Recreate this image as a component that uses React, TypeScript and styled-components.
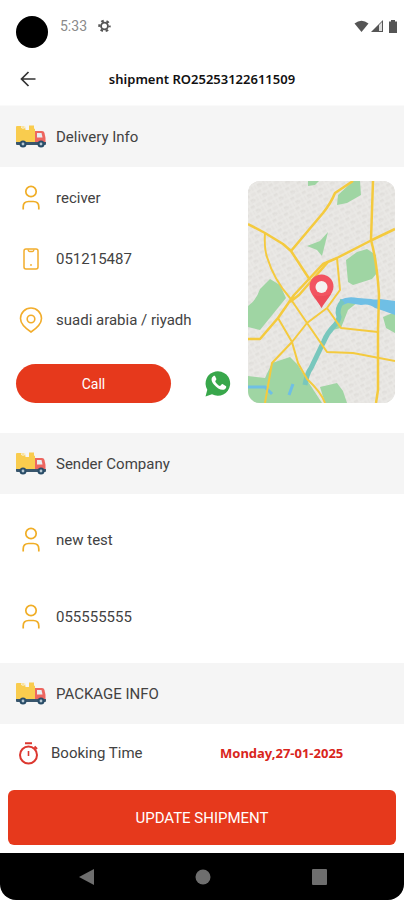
import React from "react";
import styled, { createGlobalStyle } from "styled-components";

const GlobalStyle = createGlobalStyle`
  *, *::before, *::after { box-sizing: border-box; }
  body { margin: 0; background: #fff; font-family: Roboto, "Open Sans", sans-serif; color: #424242; }
  h1, h2, p, dl, dd { margin: 0; }
  button { border: 0; padding: 0; font-family: inherit; cursor: pointer; }
  svg { display: block; flex: none; }
`;

const Screen = styled.div`
  display: flex;
  flex-direction: column;
  min-height: 100vh;
  background: #fff;
`;

const StatusBar = styled.div`
  display: flex;
  align-items: center;
  height: 52px;
  padding: 0 6px 0 16px;
  color: #555;
`;

const CameraHole = styled.span`
  width: 32px;
  height: 32px;
  margin-top: 12px;
  border-radius: 50%;
  background: #000;
`;

const Clock = styled.span`
  margin: 0 11px 0 12px;
  font-size: 14px;
  color: #8a8a8a;
`;

const StatusIcons = styled.div`
  display: flex;
  align-items: center;
  gap: 2px;
  margin-left: auto;
`;

const AppBar = styled.header`
  display: grid;
  grid-template-columns: 56px 1fr 56px;
  align-items: center;
  height: 54px;
  border-bottom: 1px solid #fafafa;
`;

const IconButton = styled.button`
  display: grid;
  place-items: center;
  background: transparent;
  color: #333;
`;

const Title = styled.h1`
  font-family: "Noto Sans", sans-serif;
  font-size: 13px;
  font-weight: 600;
  line-height: 20px;
  text-align: center;
  color: #111;
`;

const Band = styled.div`
  display: flex;
  align-items: center;
  gap: 10px;
  height: 61px;
  padding: 0 16px;
  background: #f5f5f5;
`;

const BandTitle = styled.h2`
  font-size: 15px;
  font-weight: 400;
  line-height: 24px;
`;

const DeliveryBody = styled.div`
  display: flex;
  gap: 17px;
  padding: 0 9px 30px 16px;
`;

const DeliveryDetails = styled.div`
  flex: 1;
  min-width: 0;
`;

const MapButton = styled.button`
  width: 147px;
  height: 222px;
  margin-top: 14px;
  border-radius: 12px;
  overflow: hidden;
  background: #e6e5e1;
`;

const InfoRow = styled.div<{ $tall?: boolean }>`
  display: flex;
  align-items: center;
  gap: 10px;
  height: ${(p) => (p.$tall ? 77 : 61)}px;
  font-size: 15px;
  line-height: 24px;
`;

const IconSlot = styled.span`
  display: grid;
  place-items: center;
  width: 30px;
`;

const SenderBody = styled.div`
  padding: 7px 16px 8px;
`;

const ContactActions = styled.div`
  display: flex;
  align-items: center;
  justify-content: space-between;
  margin-top: 14px;
`;

const CallButton = styled.button`
  width: 155px;
  height: 39px;
  border-radius: 20px;
  background: #e6391c;
  color: #fff;
  font-size: 14px;
`;

const BookingRow = styled.dl`
  display: grid;
  grid-template-columns: 211px 1fr;
  align-items: center;
  height: 58px;
  padding-left: 9px;
`;

const BookingLabel = styled.dt`
  display: flex;
  align-items: center;
  gap: 12px;
  padding-left: 9px;
  font-size: 15px;
  line-height: 24px;
`;

const BookingDate = styled.dd`
  font-family: "Noto Sans", sans-serif;
  font-size: 13px;
  font-weight: 700;
  color: #d9251c;
`;

const Footer = styled.div`
  padding: 8px;
`;

const UpdateButton = styled.button`
  width: 100%;
  height: 55px;
  border-radius: 6px;
  background: #e6391c;
  color: #fff;
  font-size: 15px;
`;

const NavBar = styled.nav`
  display: flex;
  align-items: center;
  justify-content: center;
  gap: 100px;
  height: 47px;
  margin-top: auto;
  border-radius: 0 0 16px 16px;
  background: #000;
`;

const NavButton = styled.button`
  background: transparent;
  color: #6e6e6e;
`;

const Truck = () => (
  <svg width="30" height="24" viewBox="0 0 30 24" aria-hidden="true">
    <path d="M1 1h4v2h4V1h0l.500 4h3.500V.500H18v3l1 .5v14H0V2q0-1 1-1z" fill="#f9cc4e" />
    <path d="M5 1h3.500v3H6z" fill="#fae3a0" />
    <path d="M19 6h7q2 0 2.500 2l1 5v5H19z" fill="#ed6660" />
    <path d="M21 8h4.500l1 4.500H21z" fill="#e8eef2" />
    <path d="M0 17h30v2q0 1-1 1H1q-1 0-1-1z" fill="#39566d" />
    <circle cx="7" cy="19" r="3.500" fill="#294d68" />
    <circle cx="25" cy="19" r="3.500" fill="#294d68" />
    <circle cx="7" cy="19" r="1.400" fill="#b7c8d3" />
    <circle cx="25" cy="19" r="1.400" fill="#b7c8d3" />
  </svg>
);

const Person = () => (
  <svg width="18" height="25" viewBox="0 0 18 25" fill="none" stroke="#f0ad25" strokeWidth="1.700" aria-hidden="true">
    <circle cx="9" cy="6.500" r="5.200" />
    <path d="M1.200 24.500V22q0-5.500 5.500-5.500h4.600q5.500 0 5.500 5.500v2.500" />
  </svg>
);

const Phone = () => (
  <svg width="16" height="22" viewBox="0 0 16 22" fill="none" stroke="#f2ad2c" strokeWidth="1.500" aria-hidden="true">
    <rect x="1" y="1" width="14" height="20" rx="2" />
    <path d="M5 1.500q.3 2 1.500 2h3q1.200 0 1.500-2" />
    <circle cx="8" cy="17" r=".3" />
  </svg>
);

const Place = () => (
  <svg width="24" height="26" viewBox="0 0 24 26" fill="none" stroke="#f2ad2c" strokeWidth="1.600" aria-hidden="true">
    <path d="M12 25C9 23 1.500 17.500 1.500 11.500a10.500 10.500 0 0 1 21 0C22.500 17.500 15 23 12 25z" />
    <circle cx="12" cy="12" r="3.800" />
  </svg>
);

const WhatsApp = () => (
  <svg width="26" height="27" viewBox="0 0 26 27" aria-hidden="true">
    <path d="M.5 26.500 2.300 19.800A12.300 12.300 0 1 1 7 24.300z" fill="#38a74b" />
    <path d="M8.300 6.200c-2.600 1.500-2.200 5 .8 8.600 3.400 4.200 8.200 6.200 10.700 4.400 1.400-.9 1.600-2.300 1.300-3l-3.600-2.100c-1-.2-1.600 1.800-2.500 1.800-1.500-.3-4.200-2.900-4.700-4.500-.1-.9 1.300-1.400 1.100-2.300L10 6.100c-.4-.5-1.100-.4-1.700.1z" fill="#fff" />
  </svg>
);

const Stopwatch = () => (
  <svg width="21" height="23" viewBox="0 0 21 23" fill="none" stroke="#dc3830" strokeWidth="2" aria-hidden="true">
    <circle cx="10.500" cy="13" r="8.500" />
    <path d="M7 1.200h7M16.500 4.500l2.500 2.500" />
    <path d="M10.500 9v5" strokeWidth="1.600" />
  </svg>
);

const CityMap = () => (
  <svg width="100%" height="100%" viewBox="0 0 147 222" preserveAspectRatio="xMidYMid slice" aria-hidden="true">
    <defs>
      <pattern id="blocks" width="13" height="11" patternUnits="userSpaceOnUse" patternTransform="rotate(-28)">
        <path d="M0 1h13M0 6h13M2 0v11M8 0v6M5 6v5M11 6v5" stroke="#ecebe8" strokeWidth="1" />
        <path d="M3 3h4M9 9h2M6 8h3" stroke="#dddbd7" strokeWidth="1" />
      </pattern>
    </defs>
    <path d="M0 0h147v222H0z" fill="#e5e3e0" />
    <path d="M0 0h147v222H0z" fill="url(#blocks)" />
    <g fill="#9fd5a3">
      <path d="M60 0h11l-4 4-7 1zM105 0h7l1 14-14 8-10 2 1-10zM80 51l-6 24-5-6-10-4 13-5z" />
      <path d="M119 68l9 6 1 18-5 6-19 6-5-3-2-22 11-8z" />
      <path d="M22 98l10 6 6 13-26 32-12-3v-21q8-5 12-17z" />
      <path d="M0 195l17 2 7-15 12-4 6-2 8 8 9 15 15 23H0zM72 206l17-4 6 8 4 12H77zM135 136l12-5v21l-9-5z" />
      <path d="M92 118l18 3-10 8-7 18-9 2 6-15z" />
    </g>
    <g fill="none" stroke="#6fbfe5" strokeWidth="3">
      <path d="M0 206h17l7 7M45 203l-4 11" />
    </g>
    <path d="M92 119q7-4 18-2l13 1q5 1 9 0l15 2v14l-11-4-9-3q-6-5-14-3l-13-2-8 3z" fill="#6fbfe5" />
    <path d="M95 120q-7 7-4 16c-1 9-9 9-15 24l-13 27q-4 5-6 17" fill="none" stroke="#78c7bd" strokeWidth="5" />
    <g fill="none" stroke="#f4ca3e" strokeWidth="2" strokeLinejoin="round">
      <path d="M0 43l17 9 18 11 8 7 19 29" strokeWidth="2.500" />
      <path d="M105 0L87 12Q83 22 75 32L43 70M147 48l-23 11-35 18-14 6-29 31-16 23-18 21H0M80 81l-29 33-9 7" strokeWidth="2.500" />
      <path d="M125 0l-2 59q6 22 8 55l-1 35v60l-2 13" strokeWidth="2.500" />
      <path d="M89 77l3 32-13 18-20 15-15 19-20 21-7 40M17 52q-1 15 2 24 7 23 23 41l17 25 20 29 26 1 42 8M79 127l14 20 37 4M30 137l14 24 6 21 9 16q14 13 18 24" />
    </g>
    <path d="M73.500 127C70 120 61.500 113 61.500 105.500a12 12 0 0 1 24 0C85.500 113 77 120 73.500 127z" fill="#f25461" />
    <path d="M66 114q8 3 17-1l-9.500 14z" fill="#e74352" opacity=".5" />
    <circle cx="73.500" cy="106" r="6" fill="#f5f3f1" />
  </svg>
);

const SectionBand = ({ title }: { title: string }) => (
  <Band>
    <Truck />
    <BandTitle>{title}</BandTitle>
  </Band>
);

const Info = ({ icon, text, tall }: { icon: React.ReactNode; text: string; tall?: boolean }) => (
  <InfoRow $tall={tall}>
    <IconSlot>{icon}</IconSlot>
    <p>{text}</p>
  </InfoRow>
);

export default function App() {
  return (
    <Screen>
      <GlobalStyle />
      <StatusBar>
        <CameraHole />
        <Clock>5:33</Clock>
        <svg width="13" height="14" viewBox="0 0 14 14" fill="none" stroke="currentColor" aria-hidden="true">
          <circle cx="7" cy="7" r="3.700" strokeWidth="2" />
          <circle cx="7" cy="7" r="5.500" strokeWidth="2.400" strokeDasharray="2.760 3" strokeDashoffset="1.400" />
        </svg>
        <StatusIcons>
          <svg width="15" height="13" viewBox="0 0 15 13" fill="currentColor" aria-hidden="true">
            <path d="M.5 3.500Q7.500-2 14.500 3.500L7.500 12z" />
          </svg>
          <svg width="13" height="13" viewBox="0 0 13 13" aria-hidden="true">
            <path d="M0 12L12 0v12z" fill="currentColor" />
            <path d="M8 5l3-3v9H8z" fill="#ddd" />
          </svg>
          <svg width="12" height="13" viewBox="0 0 12 13" fill="currentColor" aria-hidden="true">
            <path d="M3 1.500h2V0h4v1.500h2V13H3z" />
          </svg>
        </StatusIcons>
      </StatusBar>
      <AppBar>
        <IconButton aria-label="Back">
          <svg width="16" height="16" viewBox="0 0 16 16" fill="none" stroke="currentColor" strokeWidth="1.700" aria-hidden="true">
            <path d="M15.500 8H1.500M8.500 1l-7 7 7 7" />
          </svg>
        </IconButton>
        <Title>shipment RO25253122611509</Title>
      </AppBar>
      <main>
        <section>
          <SectionBand title="Delivery Info" />
          <DeliveryBody>
            <DeliveryDetails>
              <Info icon={<Person />} text="reciver" />
              <Info icon={<Phone />} text="051215487" />
              <Info icon={<Place />} text="suadi arabia / riyadh" />
              <ContactActions>
                <CallButton>Call</CallButton>
                <IconButton aria-label="WhatsApp">
                  <WhatsApp />
                </IconButton>
              </ContactActions>
            </DeliveryDetails>
            <MapButton aria-label="Open map">
              <CityMap />
            </MapButton>
          </DeliveryBody>
        </section>
        <section>
          <SectionBand title="Sender Company" />
          <SenderBody>
            <Info tall icon={<Person />} text="new test" />
            <Info tall icon={<Person />} text="055555555" />
          </SenderBody>
        </section>
        <section>
          <SectionBand title="PACKAGE INFO" />
          <BookingRow>
            <BookingLabel>
              <Stopwatch />
              Booking Time
            </BookingLabel>
            <BookingDate>Monday,27-01-2025</BookingDate>
          </BookingRow>
        </section>
      </main>
      <Footer>
        <UpdateButton>UPDATE SHIPMENT</UpdateButton>
      </Footer>
      <NavBar aria-label="System">
        <NavButton aria-label="Back">
          <svg width="17" height="16" viewBox="0 0 17 16" fill="currentColor" aria-hidden="true">
            <path d="M1 8l15-8v16z" />
          </svg>
        </NavButton>
        <NavButton aria-label="Home">
          <svg width="16" height="16" viewBox="0 0 16 16" fill="currentColor" aria-hidden="true">
            <circle cx="8" cy="8" r="7.500" />
          </svg>
        </NavButton>
        <NavButton aria-label="Recent apps">
          <svg width="16" height="16" viewBox="0 0 16 16" fill="currentColor" aria-hidden="true">
            <rect x="1" width="15" height="16" rx="1" />
          </svg>
        </NavButton>
      </NavBar>
    </Screen>
  );
}
